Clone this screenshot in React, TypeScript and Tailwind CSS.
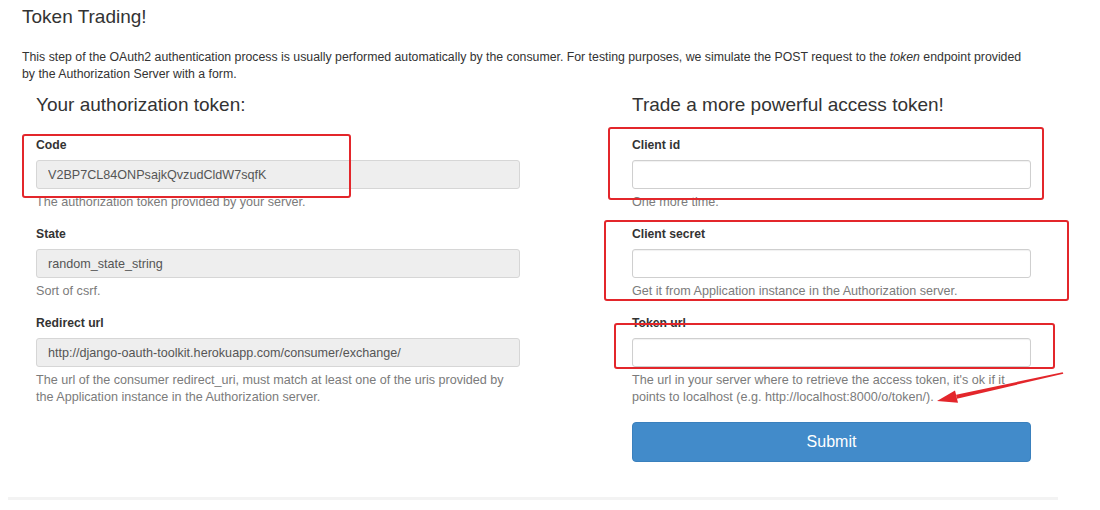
import * as React from "react";

type Field = {
  label: string;
  value?: string;
  help: React.ReactNode;
  disabled?: boolean;
};

const leftFields: Field[] = [
  {
    label: "Code",
    value: "V2BP7CL84ONPsajkQvzudCldW7sqfK",
    help: "The authorization token provided by your server.",
    disabled: true,
  },
  {
    label: "State",
    value: "random_state_string",
    help: "Sort of csrf.",
    disabled: true,
  },
  {
    label: "Redirect url",
    value: "http://django-oauth-toolkit.herokuapp.com/consumer/exchange/",
    help: "The url of the consumer redirect_uri, must match at least one of the uris provided by the Application instance in the Authorization server.",
    disabled: true,
  },
];

const rightFields: Field[] = [
  { label: "Client id", help: "One more time." },
  {
    label: "Client secret",
    help: "Get it from Application instance in the Authorization server.",
  },
  {
    label: "Token url",
    help: "The url in your server where to retrieve the access token, it's ok if it points to localhost (e.g. http://localhost:8000/o/token/).",
  },
];

function FormField({ field, last }: { field: Field; last?: boolean }) {
  return (
    <div className={last ? "" : "mb-[13px]"}>
      <label className="block h-[20px] text-[12.2px] leading-[20px] font-bold text-[#333]">
        {field.label}
      </label>
      <input
        readOnly
        value={field.value ?? ""}
        className={
          field.disabled
            ? "mt-[5px] block h-[29px] w-full rounded-[3px] border border-[#d6d6d6] bg-[#eeeeee] px-[11px] text-[12.6px] text-[#555] outline-none"
            : "mt-[5px] block h-[29px] w-full rounded-[3px] border border-[#cfcfcf] bg-white px-[11px] text-[12.6px] text-[#555] shadow-[inset_0_1px_1px_rgba(0,0,0,0.06)] outline-none"
        }
      />
      <p className="mt-[5px] text-[12.6px] leading-[17px] text-[#7b7b7b]">{field.help}</p>
    </div>
  );
}

function Annotations() {
  return (
    <>
      <div className="pointer-events-none absolute top-[134px] left-[22px] h-[64px] w-[329px] rounded-[3px] border-2 border-[#e3262b]" />
      <div className="pointer-events-none absolute top-[127px] left-[608px] h-[73px] w-[436px] rounded-[3px] border-2 border-[#e3262b]" />
      <div className="pointer-events-none absolute top-[220px] left-[604px] h-[81px] w-[465px] rounded-[3px] border-2 border-[#e3262b]" />
      <div className="pointer-events-none absolute top-[323px] left-[614px] h-[46px] w-[441px] rounded-[3px] border-2 border-[#e3262b]" />
      <svg
        className="pointer-events-none absolute top-0 left-0"
        width="1100"
        height="510"
        viewBox="0 0 1100 510"
      >
        <polygon
          points="1063.3,373.8 1062.7,372.2 956.1,394.7 956.9,398.7"
          fill="#e3262b"
        />
        <polygon points="937,401 955,390.6 958,402.8" fill="#e3262b" />
      </svg>
    </>
  );
}

export default function App() {
  return (
    <div className="relative h-[510px] w-[1100px] overflow-hidden bg-white font-['Liberation_Sans',Arial,sans-serif] text-[#333]">
      <div className="px-[22px] pt-[7px]">
        <h1 className="text-[19px] leading-[20px] font-normal text-[#333]">Token Trading!</h1>
        <p className="mt-[22px] w-[1070px] text-[12.3px] leading-[17px] text-[#333]">
          This step of the OAuth2 authentication process is usually performed automatically by the
          consumer. For testing purposes, we simulate the POST request to the <em>token</em>{" "}
          endpoint provided
          <br />
          by the Authorization Server with a form.
        </p>
      </div>

      <div className="mt-[12px] flex">
        <div className="ml-[36px] w-[484px]">
          <h3 className="text-[19px] leading-[20px] font-normal text-[#333]">
            Your authorization token:
          </h3>
          <div className="mt-[20px]">
            {leftFields.map((f, i) => (
              <FormField key={f.label} field={f} last={i === leftFields.length - 1} />
            ))}
          </div>
        </div>

        <div className="ml-[112px] w-[399px]">
          <h3 className="text-[19px] leading-[20px] font-normal text-[#333]">
            Trade a more powerful access token!
          </h3>
          <div className="mt-[20px]">
            {rightFields.map((f, i) => (
              <FormField key={f.label} field={f} last={i === rightFields.length - 1} />
            ))}
          </div>
          <button
            type="button"
            className="mt-[16px] h-[40px] w-full rounded-[4px] border border-[#3a80bd] bg-[#428bca] text-[16px] text-white"
          >
            Submit
          </button>
        </div>
      </div>

      <div className="mt-[35px] ml-[8px] h-[3px] w-[1050px] bg-[#f3f3f3]" />

      <Annotations />
    </div>
  );
}
